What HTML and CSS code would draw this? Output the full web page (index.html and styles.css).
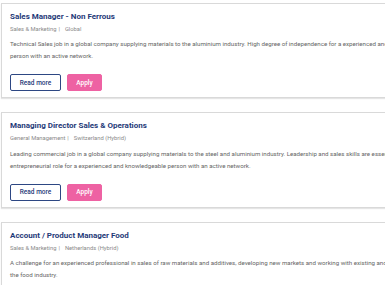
FILE: index.html
```html
<!DOCTYPE html>
<html>
<head>
<meta charset="utf-8">
<link rel="stylesheet" href="styles.css">
</head>
<body>
<div class="list">
  <div class="card">
    <h2 class="title">Sales Manager - Non Ferrous</h2>
    <div class="meta"><span>Sales &amp; Marketing</span><span class="sep">|</span><span>Global</span></div>
    <p class="desc">Technical Sales job in a global company supplying materials to the aluminium industry. High degree of independence for a experienced and motivated<br>person with an active network.</p>
    <div class="actions"><a class="btn btn-outline">Read more</a><a class="btn btn-apply">Apply</a></div>
  </div>
  <div class="card">
    <h2 class="title">Managing Director Sales &amp; Operations</h2>
    <div class="meta"><span>General Management</span><span class="sep">|</span><span>Switzerland (Hybrid)</span></div>
    <p class="desc">Leading commercial job in a global company supplying materials to the steel and aluminium industry. Leadership and sales skills are essential in this<br>entrepreneurial role for a experienced and knowledgeable person with an active network.</p>
    <div class="actions"><a class="btn btn-outline">Read more</a><a class="btn btn-apply">Apply</a></div>
  </div>
  <div class="card">
    <h2 class="title">Account / Product Manager Food</h2>
    <div class="meta"><span>Sales &amp; Marketing</span><span class="sep">|</span><span>Netherlands (Hybrid)</span></div>
    <p class="desc">A challenge for an experienced professional in sales of raw materials and additives, developing new markets and working with existing and new customers in<br>the food industry.</p>
    <div class="actions"><a class="btn btn-outline">Read more</a><a class="btn btn-apply">Apply</a></div>
  </div>
</div>
</body>
</html>
```
FILE: styles.css
```css
html, body {
  margin: 0;
  padding: 0;
  background: #ffffff;
  overflow: hidden;
}
body {
  font-family: Roboto, "Liberation Sans", sans-serif;
}
.list {
  display: flex;
  flex-direction: column;
  gap: 14px;
  padding: 2.5px 0 0 1px;
  width: 460px;
}
.card {
  border: 1px solid #d9d9d9;
  box-shadow: 0 1px 1px rgba(0,0,0,0.10);
  padding: 6px 8px 6px 8px;
  background: #fff;
}
.title {
  margin: 0;
  font-size: 8px;
  line-height: 13px;
  font-weight: 700;
  color: #1f3a78;
}
.meta {
  margin-top: 2px;
  font-size: 5.8px;
  line-height: 9px;
  color: #8a8a8a;
  display: flex;
  gap: 2px;
}
.sep { margin-right: 3px; }
.desc {
  margin: 4.5px 0 0 0;
  font-size: 6.15px;
  line-height: 12px;
  color: #666;
  white-space: nowrap;
}
.actions {
  display: flex;
  gap: 6px;
  margin-top: 12px;
}
.btn {
  display: flex;
  align-items: center;
  justify-content: center;
  height: 17px;
  box-sizing: border-box;
  font-size: 6.5px;
  font-weight: 500;
  border-radius: 2px;
}
.btn-outline {
  width: 51px;
  border: 1.5px solid #2d4783;
  color: #1f3a78;
  background: #fff;
}
.btn-apply {
  width: 35px;
  background: #ee62a3;
  color: #fff;
  border: 1px solid #ee62a3;
}
```
